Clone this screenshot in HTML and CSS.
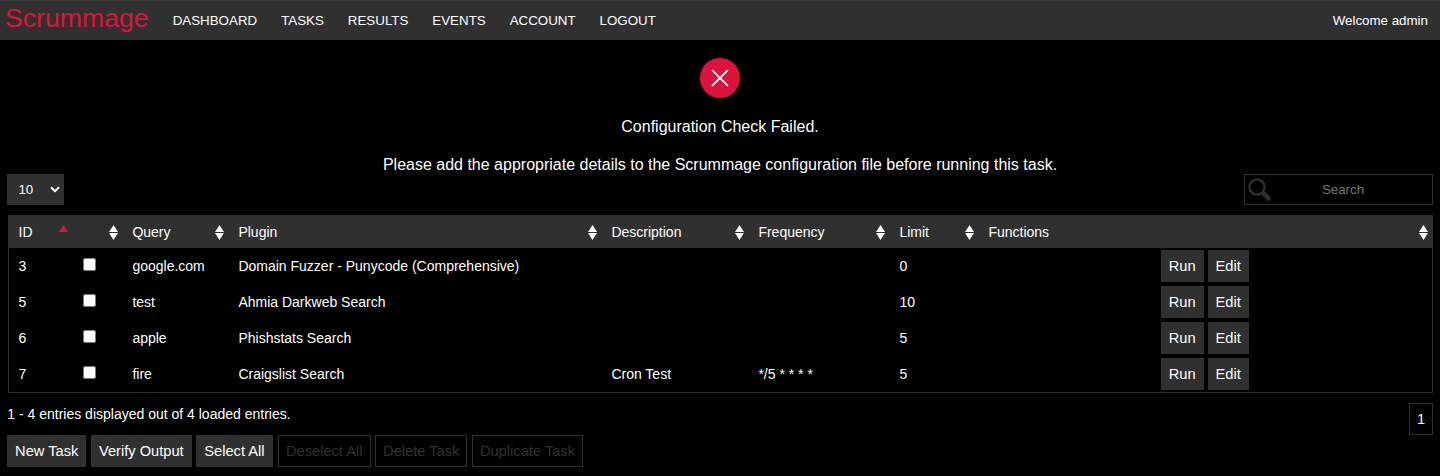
FILE: index.html
```html
<!DOCTYPE html>
<html lang="en">
<head>
<meta charset="utf-8">
<title>Scrummage</title>
<link rel="stylesheet" href="styles.css">
</head>
<body>
<nav class="navbar">
  <a class="brand">Scrummage</a>
  <a class="nav-link">DASHBOARD</a>
  <a class="nav-link">TASKS</a>
  <a class="nav-link">RESULTS</a>
  <a class="nav-link">EVENTS</a>
  <a class="nav-link">ACCOUNT</a>
  <a class="nav-link">LOGOUT</a>
  <span class="welcome">Welcome admin</span>
</nav>
<section class="message">
  <svg class="error-icon" viewBox="0 0 40 40"><circle cx="20" cy="20" r="20" fill="#dc143c"/><path d="M12.6 12.6 27.4 27.4M27.4 12.6 12.6 27.4" stroke="#fff" stroke-width="1.8" stroke-linecap="round"/></svg>
  <p>Configuration Check Failed.</p>
  <p>Please add the appropriate details to the Scrummage configuration file before running this task.</p>
</section>
<div class="controls">
  <div class="page-size"><span>10</span><svg class="chevron" viewBox="0 0 10 7"><path d="M1 1.2 5 5.2 9 1.2" fill="none" stroke="#fff" stroke-width="2"/></svg></div>
  <div class="search-box">
    <svg class="search-icon" viewBox="0 0 24 24"><circle cx="9" cy="9" r="7.6" fill="none" stroke="#303030" stroke-width="2.4"/><path d="m14.2 14.2 2.6 2.6" stroke="#303030" stroke-width="3"/><path d="m16.4 16.4 4 4" stroke="#303030" stroke-width="4.8" stroke-linecap="round"/></svg>
    <input class="search" type="text" placeholder="Search">
  </div>
</div>
<table class="tasks">
  <colgroup><col class="c-id"><col class="c-check"><col class="c-query"><col class="c-plugin"><col class="c-desc"><col class="c-freq"><col class="c-limit"><col></colgroup>
  <thead><tr>
    <th><div class="head">ID<i class="sort asc"></i></div></th>
    <th><div class="head"><i class="sort"></i></div></th>
    <th><div class="head">Query<i class="sort"></i></div></th>
    <th><div class="head">Plugin<i class="sort"></i></div></th>
    <th><div class="head">Description<i class="sort"></i></div></th>
    <th><div class="head">Frequency<i class="sort"></i></div></th>
    <th><div class="head">Limit<i class="sort"></i></div></th>
    <th><div class="head">Functions<i class="sort"></i></div></th>
  </tr></thead>
  <tbody>
    <tr><td>3</td><td><input class="check" type="checkbox"></td><td>google.com</td><td>Domain Fuzzer - Punycode (Comprehensive)</td><td></td><td></td><td>0</td><td><div class="actions"><button class="btn run">Run</button><button class="btn edit">Edit</button></div></td></tr>
    <tr><td>5</td><td><input class="check" type="checkbox"></td><td>test</td><td>Ahmia Darkweb Search</td><td></td><td></td><td>10</td><td><div class="actions"><button class="btn run">Run</button><button class="btn edit">Edit</button></div></td></tr>
    <tr><td>6</td><td><input class="check" type="checkbox"></td><td>apple</td><td>Phishstats Search</td><td></td><td></td><td>5</td><td><div class="actions"><button class="btn run">Run</button><button class="btn edit">Edit</button></div></td></tr>
    <tr><td>7</td><td><input class="check" type="checkbox"></td><td>fire</td><td>Craigslist Search</td><td>Cron Test</td><td>*/5 * * * *</td><td>5</td><td><div class="actions"><button class="btn run">Run</button><button class="btn edit">Edit</button></div></td></tr>
  </tbody>
</table>
<div class="summary"><span>1 - 4 entries displayed out of 4 loaded entries.</span><button class="btn page">1</button></div>
<div class="toolbar">
  <button class="btn">New Task</button><button class="btn">Verify Output</button><button class="btn">Select All</button>
  <button class="btn" disabled>Deselect All</button><button class="btn" disabled>Delete Task</button><button class="btn" disabled>Duplicate Task</button>
</div>
</body>
</html>
```
FILE: styles.css
```css
* { box-sizing: border-box; }
body { margin: 0; background: #000; color: #fff; font: 14px "Liberation Sans", Arial, sans-serif; overflow: hidden; }

.navbar { display: flex; align-items: center; height: 40px; padding: 0 12px 0 5px; background: #303030; border-top: 1px solid #383838; font-size: 13.333px; }
.brand { color: #dc143c; font-size: 26.667px; line-height: 30px; margin: -6px 12px 0 0; }
.nav-link { padding: 0 12px; }
.welcome { margin-left: auto; }

.message { display: flex; flex-direction: column; align-items: center; padding-top: 18px; height: 134px; font-size: 16px; line-height: 18px; }
.error-icon { width: 40px; height: 40px; flex: none; }
.message p { margin: 20px 0 0; }

.controls { display: flex; justify-content: space-between; padding: 0 7px; height: 31px; font-size: 13.333px; }
.page-size { display: flex; align-items: center; justify-content: space-between; width: 57px; padding: 0 4px 0 11.4px; background: #303030; }
.chevron { width: 10px; height: 7px; }
.search-box { display: flex; align-items: center; width: 189px; border: 1px solid #303030; padding-left: 3px; }
.search-icon { width: 24px; height: 24px; flex: none; }
.search { flex: 1; min-width: 0; border: 0; padding: 0 27px 0 9px; background: transparent; color: #fff; font: inherit; text-align: center; }
.search::placeholder { color: #757575; }

.tasks { width: 1425px; height: 178px; margin: 10px 0 0 8px; table-layout: fixed; border-collapse: separate; border-spacing: 0; border: solid #303030; border-width: 0 1px 1px; }
.c-id { width: 63px; }
.c-check { width: 50px; }
.c-query { width: 106px; }
.c-plugin { width: 373px; }
.c-desc { width: 147px; }
.c-freq { width: 141px; }
.c-limit { width: 89px; }
.tasks th { height: 33px; padding: 0 4px 0 10.4px; background: #303030; font-weight: 400; }
.tasks td { height: 36px; padding: 0 11px 0 10.4px; white-space: nowrap; }
.tasks th:first-child, .tasks td:first-child { padding-left: 9.5px; }
.head { display: flex; align-items: center; height: 33px; }
.sort { display: flex; flex-direction: column; gap: 1px; width: 9px; height: 15px; margin: 2px 0 0 auto; }
.sort::before, .sort::after { content: ""; height: 7px; background: #fff; clip-path: polygon(50% 0, 100% 100%, 0 100%); }
.sort::after { clip-path: polygon(0 0, 100% 0, 50% 100%); }
.sort.asc::before { background: #dc143c; }
.sort.asc::after { visibility: hidden; }
.check { display: block; width: 13px; height: 13px; margin: 0 0 3px 0.6px; }
.actions { display: flex; justify-content: center; gap: 4px; }

.btn { height: 32px; padding: 0 7.1px; border: 1px solid #303030; border-radius: 0; background: #303030; color: #fff; font: 14.667px "Liberation Sans", Arial, sans-serif; }
.btn:disabled { background: #000; color: #303030; }
.btn.page { width: 24px; padding: 0; background: #000; }
.btn.run { width: 43px; padding: 0; }
.btn.edit { width: 41px; padding: 0; }
.summary { display: flex; justify-content: space-between; align-items: flex-start; padding: 10px 7px 0 7.3px; }
.summary span { line-height: 22px; }
.toolbar { display: flex; gap: 4.4px; padding-left: 7px; }
.toolbar .btn:enabled + .btn:disabled { margin-left: 0.8px; }
```
